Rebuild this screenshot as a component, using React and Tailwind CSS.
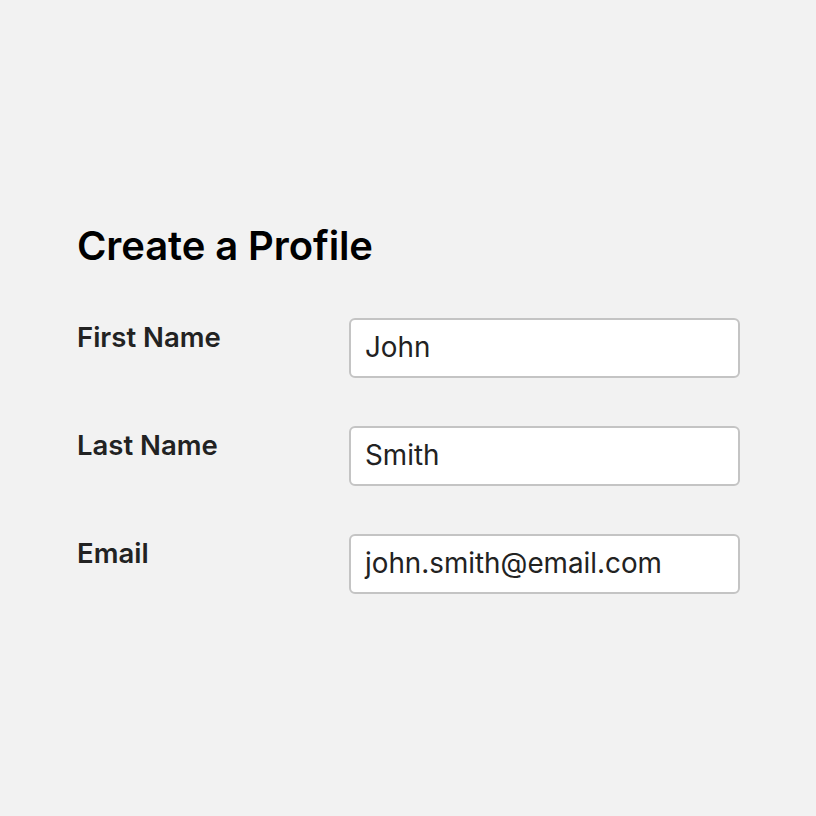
export default function App() {
  const rows = [
    ["First Name", "John"],
    ["Last Name", "Smith"],
    ["Email", "john.smith@email.com"],
  ];
  return (
    <div className="w-[816px] h-[816px] bg-[#f2f2f2] pt-[224px] pl-[77px]" style={{ fontFamily: "Inter, sans-serif" }}>
      <h1 className="text-[40px] leading-[44px] font-semibold text-black tracking-[-0.1px]">Create a Profile</h1>
      <div className="mt-[50px] flex flex-col gap-[48px]">
        {rows.map(([label, value]) => (
          <div key={label} className="flex items-start">
            <div className="w-[272px] text-[27.5px] leading-[38px] font-semibold text-[#222]">{label}</div>
            <div className="w-[391px] h-[60px] bg-white border-2 border-[#c4c4c4] rounded-[6px] flex items-center pl-[14px] text-[27.8px] text-[#222]">
              {value}
            </div>
          </div>
        ))}
      </div>
    </div>
  );
}
